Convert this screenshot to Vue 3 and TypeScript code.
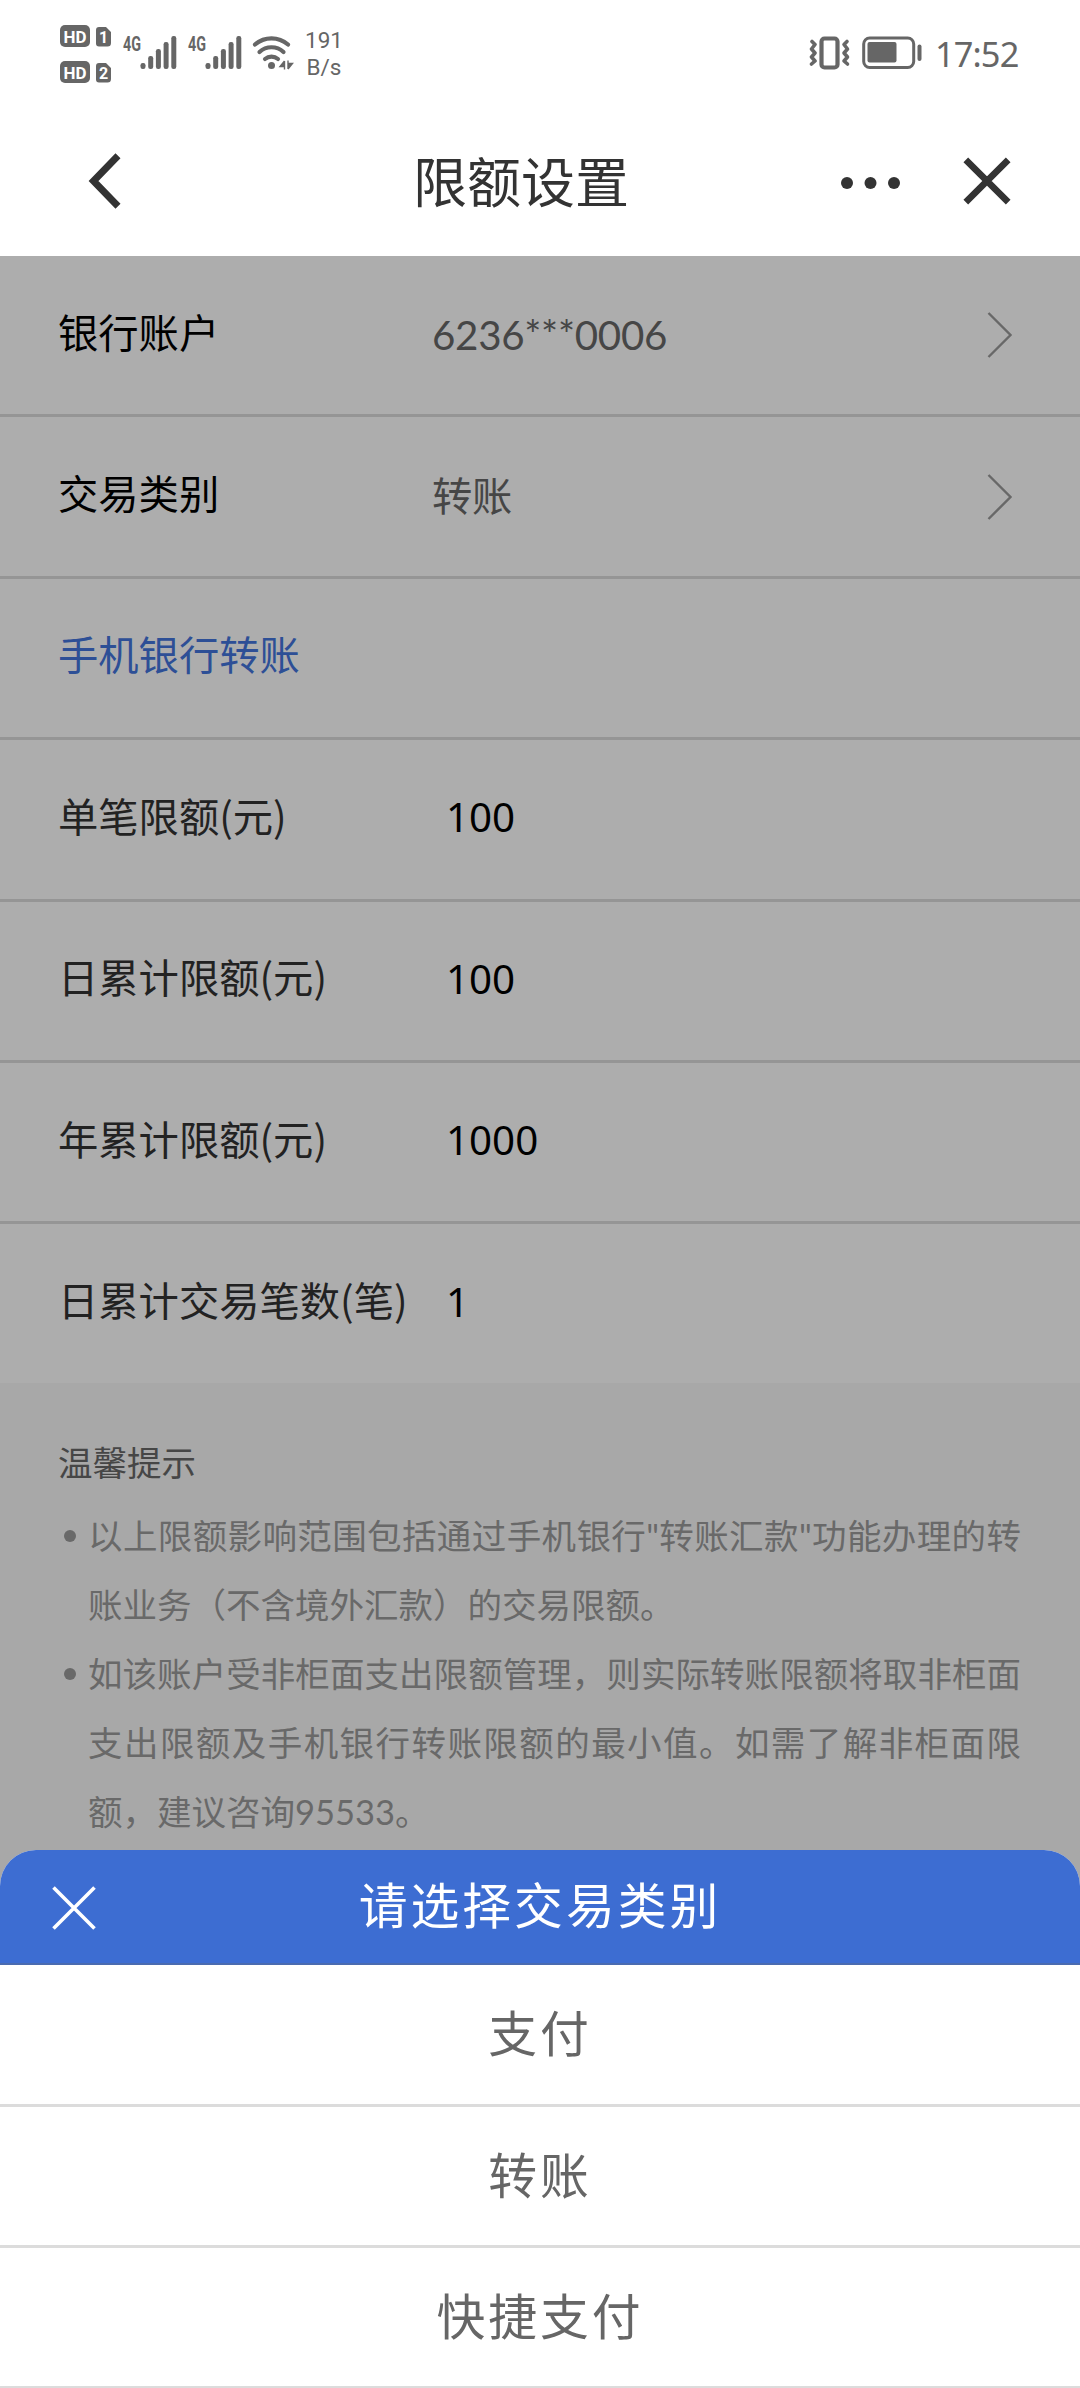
<script setup lang="ts">
interface Row {
  label: string
  value?: string
  kind: 'link' | 'section' | 'field'
}

const rows: Row[] = [
  { label: '银行账户', value: '6236***0006', kind: 'link' },
  { label: '交易类别', value: '转账', kind: 'link' },
  { label: '手机银行转账', kind: 'section' },
  { label: '单笔限额(元)', value: '100', kind: 'field' },
  { label: '日累计限额(元)', value: '100', kind: 'field' },
  { label: '年累计限额(元)', value: '1000', kind: 'field' },
  { label: '日累计交易笔数(笔)', value: '1', kind: 'field' },
]

const tips: string[][] = [
  ['以上限额影响范围包括通过手机银行"转账汇款"功能办理的转', '账业务（不含境外汇款）的交易限额。'],
  [
    '如该账户受非柜面支出限额管理，则实际转账限额将取非柜面',
    '支出限额及手机银行转账限额的最小值。如需了解非柜面限',
    '额，建议咨询95533。',
  ],
]

const options: string[] = ['支付', '转账', '快捷支付']
const bars: number[] = [6, 13, 20, 27, 33]
</script>

<template>
  <div class="screen">
    <div class="status">
      <svg class="sims" width="52" height="60" viewBox="0 0 52 60">
        <g fill="#666">
          <rect x="0" y="0" width="30" height="22" rx="5" />
          <path d="M39 2h7l5 5v11a3.500 3.500 0 0 1-3.500 3.500h-8.500a3 3 0 0 1-3-3V5a3 3 0 0 1 3-3z" />
          <rect x="0" y="36" width="30" height="22" rx="5" />
          <path d="M39 38h7l5 5v11a3.500 3.500 0 0 1-3.500 3.500h-8.500a3 3 0 0 1-3-3V41a3 3 0 0 1 3-3z" />
        </g>
        <g class="badge" fill="#fff" text-anchor="middle">
          <text x="15" y="17.500" textLength="23" lengthAdjust="spacingAndGlyphs">HD</text>
          <text x="43.500" y="18" font-size="16">1</text>
          <text x="15" y="53.500" textLength="23" lengthAdjust="spacingAndGlyphs">HD</text>
          <text x="43.500" y="54" font-size="16">2</text>
        </g>
      </svg>
      <svg v-for="n in 2" :key="n" class="signal" width="55" height="46" viewBox="0 -10 55 46">
        <text class="gen" x="1" y="15.500" textLength="18" lengthAdjust="spacingAndGlyphs">4G</text>
        <rect
          v-for="(h, i) in bars"
          :key="i"
          :x="18.5 + i * 7.700"
          :y="34 - h"
          width="5"
          :height="h"
          rx="2.200"
          fill="#666"
        />
      </svg>
      <svg class="wifi" width="42" height="36" viewBox="0 0 42 36">
        <g fill="none" stroke="#666" stroke-width="4.200" stroke-linecap="round">
          <path d="M3 9.500a25 25 0 0 1 33 0" />
          <path d="M7.500 17a17.500 17.500 0 0 1 24 0" />
          <path d="M13 24a10 10 0 0 1 13 0" />
        </g>
        <circle cx="19.500" cy="30.500" r="3.500" fill="#666" />
        <path d="M32.500 26v8.500M32.500 26l-4.500 5.500h4.500M36 25.500v8.500M36 34l4.500-5.500h-4.500" fill="#666" stroke="#666" stroke-width="1.400" />
      </svg>
      <div class="speed"><span>191</span><span>B/s</span></div>
      <div class="grow"></div>
      <svg class="vibrate" width="42" height="36" viewBox="0 0 42 36">
        <g fill="none" stroke="#666">
          <rect x="12.500" y="3.500" width="16" height="29" rx="3" stroke-width="4.200" />
          <path d="M3 6.500l3 3-3.500 4.500 3.500 4-3.500 4 3.500 4-3.500 3" stroke-width="3.600" stroke-linejoin="round" stroke-linecap="round" />
          <path d="M38 6.500l-3 3 3.500 4.500-3.500 4 3.500 4-3.500 4 3.500 3" stroke-width="3.600" stroke-linejoin="round" stroke-linecap="round" />
        </g>
      </svg>
      <svg class="battery" width="62" height="34" viewBox="0 0 62 34">
        <rect x="1.700" y="2" width="50" height="29.500" rx="6" fill="none" stroke="#666" stroke-width="3" />
        <rect x="5.500" y="6" width="29" height="20.500" rx="2" fill="#666" />
        <rect x="55.500" y="8.500" width="4" height="16.500" rx="2" fill="#666" />
      </svg>
      <span class="clock">17:52</span>
    </div>

    <div class="nav">
      <svg class="back" width="36" height="60" viewBox="0 0 36 60">
        <path d="M30 4.700L5.500 30L30 55.300" fill="none" stroke="#333" stroke-width="7" />
      </svg>
      <h1>限额设置</h1>
      <svg class="more" width="60" height="12" viewBox="0 0 60 12">
        <g fill="#333">
          <circle cx="6" cy="6" r="6" /><circle cx="29.500" cy="6" r="6" /><circle cx="53" cy="6" r="6" />
        </g>
      </svg>
      <svg class="close" width="48" height="48" viewBox="0 0 48 48">
        <path d="M2.800 2.800L45.200 45.200M45.200 2.800L2.800 45.200" stroke="#333" stroke-width="6.600" />
      </svg>
    </div>

    <div class="list">
      <div v-for="row in rows" :key="row.label" class="row" :class="row.kind">
        <span class="label">{{ row.label }}</span>
        <span v-if="row.value" class="value">{{ row.value }}</span>
        <svg v-if="row.kind === 'link'" class="chev" width="26" height="48" viewBox="0 0 26 48">
          <path d="M1.500 2L23.500 24L1.500 46" fill="none" stroke="#686868" stroke-width="2.400" />
        </svg>
      </div>
    </div>

    <div class="tips">
      <h2>温馨提示</h2>
      <ul>
        <li v-for="(tip, i) in tips" :key="i">
          <span v-for="(line, j) in tip" :key="j" class="line">{{ line }}</span>
        </li>
      </ul>
    </div>

    <div class="sheet">
      <div class="sheet-head">
        <svg class="dismiss" width="44" height="44" viewBox="0 0 44 44">
          <path d="M1.500 1.500L42.500 42.500M42.500 1.500L1.500 42.500" stroke="#fff" stroke-width="3.600" />
        </svg>
        <span class="sheet-title">请选择交易类别</span>
      </div>
      <div v-for="option in options" :key="option" class="option">{{ option }}</div>
    </div>
  </div>
</template>

<style>
body {
  margin: 0;
  background: #fff;
}
</style>

<style scoped>
.screen {
  position: relative;
  width: 1080px;
  height: 2388px;
  overflow: hidden;
  display: flex;
  flex-direction: column;
  background: #a8a8a8;
  font-family: 'Noto Sans CJK SC', sans-serif;
  text-spacing-trim: space-all;
}
.status {
  height: 110px;
  flex: none;
  box-sizing: border-box;
  padding: 0 60px;
  display: flex;
  align-items: flex-start;
  background: #fff;
  color: #666;
}
.sims { margin-top: 25px; }
.badge { font: 700 17px 'Roboto', sans-serif; }
.signal { margin: 25px 0 0 10px; }
.gen {
  font: 700 19.5px 'Roboto', sans-serif;
  fill: #666;
}
.wifi { margin: 35px 0 0 10px; }
.speed {
  display: flex;
  flex-direction: column;
  align-items: center;
  margin: 27px 0 0 11px;
  width: 38px;
  font: 22.5px/27px 'Roboto', sans-serif;
}
.grow { flex: 1; }
.vibrate { margin-top: 35px; }
.battery { margin: 36px 0 0 11px; }
.clock {
  margin: 33px 1px 0 11px;
  width: 84px;
  font: 34.4px/42px 'Noto Sans', sans-serif;
  letter-spacing: -0.9px;
}
.nav {
  height: 146px;
  flex: none;
  display: flex;
  align-items: center;
  background: #fff;
  color: #333;
}
.back { margin: 0 0 4px 88px; }
.nav h1 {
  margin: 0 0 6px 289px;
  width: 217px;
  font-size: 54px;
  line-height: 80px;
  font-weight: 400;
  white-space: nowrap;
}
.more { margin: 0 0 0 211px; }
.close { margin: 0 0 4px 62px; }
.list {
  flex: none;
  background: #adadad;
}
.row {
  height: 158.4px;
  border-bottom: 3px solid #959595;
  display: flex;
  align-items: center;
  font-size: 40.3px;
  line-height: 60px;
  color: #222;
}
.row:last-child { border-bottom: 0; }
.label {
  margin: 0 0 9px 58px;
  width: 388px;
  white-space: nowrap;
}
.value {
  font-family: 'Noto Sans', 'Noto Sans CJK SC', sans-serif;
  color: #000;
  margin-bottom: 4px;
}
.link .label {
  color: #000;
  width: 374px;
}
.link .value {
  flex: 1;
  font-family: 'Lato', 'Noto Sans CJK SC', sans-serif;
  color: #464646;
  margin-bottom: 1px;
  letter-spacing: -0.3px;
}
.section .label { color: #2d4f96; }
.chev { margin-right: 67px; }
.tips {
  flex: none;
  padding: 44px 58px 0;
  font-size: 34.5px;
  color: #696969;
}
.tips h2 {
  margin: 0;
  font-size: 34.5px;
  line-height: 69.2px;
  font-weight: 400;
  color: #464646;
}
.tips ul {
  margin: 5px 0 0;
  padding: 0;
  list-style: none;
}
.tips li {
  display: grid;
  padding-left: 30px;
  position: relative;
  font-family: 'Lato', 'Noto Sans CJK SC', sans-serif;
}
.tips li::before {
  content: '';
  position: absolute;
  left: 6px;
  top: 29px;
  width: 12px;
  height: 12px;
  border-radius: 50%;
  background: #696969;
}
.line {
  width: 933px;
  line-height: 69px;
  white-space: nowrap;
  text-align: justify;
  text-align-last: justify;
}
.line:last-child { text-align-last: left; }
.sheet {
  position: absolute;
  left: 0;
  right: 0;
  top: 1850px;
  background: #fff;
  border-radius: 36px 36px 0 0;
  overflow: hidden;
  font-size: 48.8px;
  letter-spacing: 3px;
}
.sheet-head {
  height: 113px;
  border-bottom: 2px solid #4a6bb0;
  display: grid;
  grid-template-columns: 96px 1fr 96px;
  align-items: center;
  background: #3d6dd2;
  color: #fff;
}
.dismiss { margin: 2px 0 0 51.5px; }
.sheet-title {
  text-align: center;
  line-height: 72px;
  padding-bottom: 7px;
}
.option {
  height: 138px;
  line-height: 132px;
  border-bottom: 3px solid #dcdcdc;
  text-align: center;
  color: #666;
}
.sheet-head + .option { height: 139px; }
</style>
